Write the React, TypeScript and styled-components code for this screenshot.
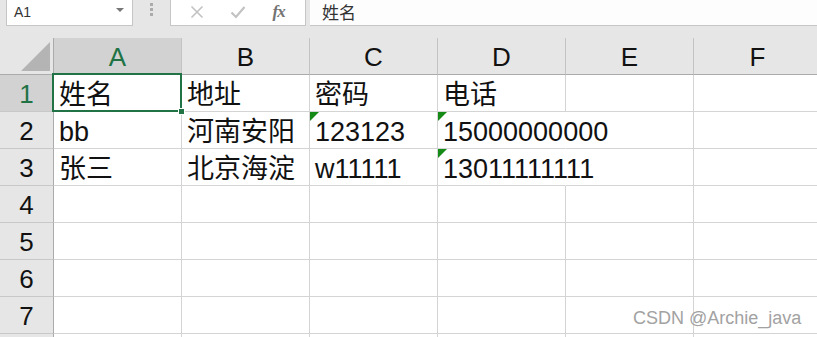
import React from 'react';
import styled, { createGlobalStyle } from 'styled-components';

const GlobalStyle = createGlobalStyle`
  html, body {
    margin: 0;
    padding: 0;
    background: #e6e6e6;
    overflow: hidden;
  }
  body {
    width: 817px;
    height: 337px;
    font-family: "Liberation Sans", "Noto Sans CJK SC", sans-serif;
  }
`;

const Page = styled.div`
  position: relative;
  width: 817px;
  height: 337px;
  overflow: hidden;
  display: flex;
  flex-direction: column;
  gap: 12px;
`;

const FormulaBar = styled.div`
  display: flex;
  align-items: stretch;
  height: 26px;
  flex-shrink: 0;
  padding-left: 6px;
`;

const NameBox = styled.div`
  width: 127px;
  box-sizing: border-box;
  display: flex;
  align-items: center;
  justify-content: space-between;
  padding: 0 8px 2px 7px;
  background: #fff;
  border: 1px solid #c6c6c6;
  border-top: none;
  font-size: 14px;
  color: #333;
`;

const DropArrow = styled.span`
  width: 0;
  height: 0;
  border-left: 4px solid transparent;
  border-right: 4px solid transparent;
  border-top: 4px solid #777;
  margin-bottom: 4px;
`;

const Grip = styled.div`
  width: 37px;
  display: flex;
  flex-direction: column;
  align-items: center;
  gap: 2px;
  padding-top: 3px;
`;

const GripDot = styled.span`
  width: 3px;
  height: 3px;
  background: #ababab;
`;

const ButtonBox = styled.div`
  width: 136px;
  box-sizing: border-box;
  display: flex;
  align-items: center;
  justify-content: space-around;
  padding: 0 6px 2px 6px;
  background: #fff;
  border: 1px solid #c6c6c6;
  border-top: none;
`;

const IconButton = styled.span`
  width: 30px;
  display: flex;
  align-items: center;
  justify-content: center;
`;

const FxLabel = styled.span`
  font-family: "Liberation Serif", serif;
  font-style: italic;
  font-weight: bold;
  font-size: 17px;
  color: #737373;
  letter-spacing: -1px;
`;

const FormulaInput = styled.div`
  flex: 1;
  min-height: 0;
  margin-left: 4px;
  display: flex;
  align-items: center;
  padding: 0 0 2px 12px;
  background: #fdfdfd;
  border-bottom: 1px solid #c6c6c6;
  font-family: "Noto Sans CJK SC", sans-serif;
  font-size: 17px;
  line-height: 17px;
  color: #333;
`;

const Sheet = styled.div`
  display: grid;
  grid-template-columns: 54px repeat(6, 128px);
  grid-auto-rows: 37px;
  background: #fff;
  width: max-content;
`;

const Corner = styled.div`
  box-sizing: border-box;
  background: #e6e6e6;
  border-right: 1px solid #ababab;
  border-bottom: 1px solid #ababab;
  display: flex;
  align-items: flex-end;
  justify-content: flex-end;
  padding: 0 3px 3px 0;
`;

const CornerTriangle = styled.span`
  width: 0;
  height: 0;
  border-left: 29px solid transparent;
  border-bottom: 29px solid #b4b4b4;
`;

const ColHeader = styled.div<{ $active?: boolean }>`
  box-sizing: border-box;
  display: flex;
  align-items: center;
  justify-content: center;
  padding-top: 2px;
  background: ${({ $active }) => ($active ? '#d2d2d2' : '#e6e6e6')};
  color: ${({ $active }) => ($active ? '#217346' : '#111')};
  border-right: 1px solid #c3c3c3;
  border-bottom: 1px solid #ababab;
  font-size: 26px;
`;

const RowHeader = styled.div<{ $active?: boolean }>`
  box-sizing: border-box;
  display: flex;
  align-items: center;
  justify-content: center;
  padding-top: 3px;
  background: ${({ $active }) => ($active ? '#d2d2d2' : '#e6e6e6')};
  color: ${({ $active }) => ($active ? '#217346' : '#111')};
  border-right: 1px solid #ababab;
  border-bottom: 1px solid #c8c8c8;
  font-size: 26px;
`;

const Cell = styled.div<{ $spill?: boolean; $flag?: boolean; $selected?: boolean }>`
  position: relative;
  box-sizing: border-box;
  display: flex;
  align-items: flex-end;
  padding: 0 0 2px 5px;
  border-right: 1px solid ${({ $spill }) => ($spill ? 'transparent' : '#d4d4d4')};
  border-bottom: 1px solid #d4d4d4;
  font-size: 27px;
  line-height: 27px;
  color: #111;
  white-space: nowrap;
  overflow: ${({ $spill, $selected }) => ($spill || $selected ? 'visible' : 'hidden')};
  z-index: ${({ $spill, $selected }) => ($selected ? 2 : $spill ? 1 : 0)};

  &::before {
    content: '';
    display: ${({ $flag }) => ($flag ? 'block' : 'none')};
    position: absolute;
    left: 0;
    top: 0;
    width: 0;
    height: 0;
    border-top: 9px solid #168a16;
    border-right: 9px solid transparent;
  }
`;

const SelectionFrame = styled.div`
  position: absolute;
  left: -2px;
  top: -2px;
  right: -1px;
  bottom: -1px;
  border: 2px solid #217346;
  pointer-events: none;
`;

const FillHandle = styled.span`
  position: absolute;
  right: -4px;
  bottom: -4px;
  width: 5px;
  height: 5px;
  background: #217346;
  outline: 1px solid #fff;
`;

const Watermark = styled.div`
  position: absolute;
  left: 633px;
  top: 308px;
  font-family: "Liberation Sans", sans-serif;
  font-size: 18px;
  color: #a2a2a2;
  z-index: 3;
`;

const columns = ['A', 'B', 'C', 'D', 'E', 'F'];

type CellData = { text?: string; flag?: boolean; spill?: boolean };

const empty: CellData[] = [{}, {}, {}, {}, {}, {}];

const rows: CellData[][] = [
  [{ text: '姓名' }, { text: '地址' }, { text: '密码' }, { text: '电话' }, {}, {}],
  [
    { text: 'bb' },
    { text: '河南安阳' },
    { text: '123123', flag: true },
    { text: '15000000000', flag: true, spill: true },
    {},
    {},
  ],
  [
    { text: '张三' },
    { text: '北京海淀' },
    { text: 'w11111' },
    { text: '13011111111', flag: true, spill: true },
    {},
    {},
  ],
  empty,
  empty,
  empty,
  empty,
  empty,
];

// only the first seven row numbers are visible in the window
const visibleRows = 7;

const CloseIcon = () => (
  <svg width="14" height="14" viewBox="0 0 14 14">
    <path d="M1.5 1.5 L12.5 12.5 M12.5 1.5 L1.5 12.5" stroke="#c2c2c2" strokeWidth="1.6" fill="none" />
  </svg>
);

const CheckIcon = () => (
  <svg width="16" height="14" viewBox="0 0 16 14">
    <path d="M1.5 7.5 L6 12 L14.5 2" stroke="#c2c2c2" strokeWidth="2.2" fill="none" />
  </svg>
);

const App: React.FC = () => {
  return (
    <>
      <GlobalStyle />
      <Page>
        <FormulaBar>
          <NameBox>
            <span>A1</span>
            <DropArrow />
          </NameBox>
          <Grip>
            <GripDot />
            <GripDot />
            <GripDot />
          </Grip>
          <ButtonBox>
            <IconButton>
              <CloseIcon />
            </IconButton>
            <IconButton>
              <CheckIcon />
            </IconButton>
            <IconButton>
              <FxLabel>fx</FxLabel>
            </IconButton>
          </ButtonBox>
          <FormulaInput>姓名</FormulaInput>
        </FormulaBar>

        <Sheet>
          <Corner>
            <CornerTriangle />
          </Corner>
          {columns.map((c) => (
            <ColHeader key={c} $active={c === 'A'}>
              {c}
            </ColHeader>
          ))}
          {rows.map((row, r) => (
            <React.Fragment key={r}>
              <RowHeader $active={r === 0}>{r < visibleRows ? r + 1 : ''}</RowHeader>
              {row.map((cell, c) => {
                const selected = r === 0 && c === 0;
                return (
                  <Cell key={c} $flag={cell.flag} $spill={cell.spill} $selected={selected}>
                    {cell.text}
                    {selected && (
                      <SelectionFrame>
                        <FillHandle />
                      </SelectionFrame>
                    )}
                  </Cell>
                );
              })}
            </React.Fragment>
          ))}
        </Sheet>

        <Watermark>CSDN @Archie_java</Watermark>
      </Page>
    </>
  );
};

export default App;
